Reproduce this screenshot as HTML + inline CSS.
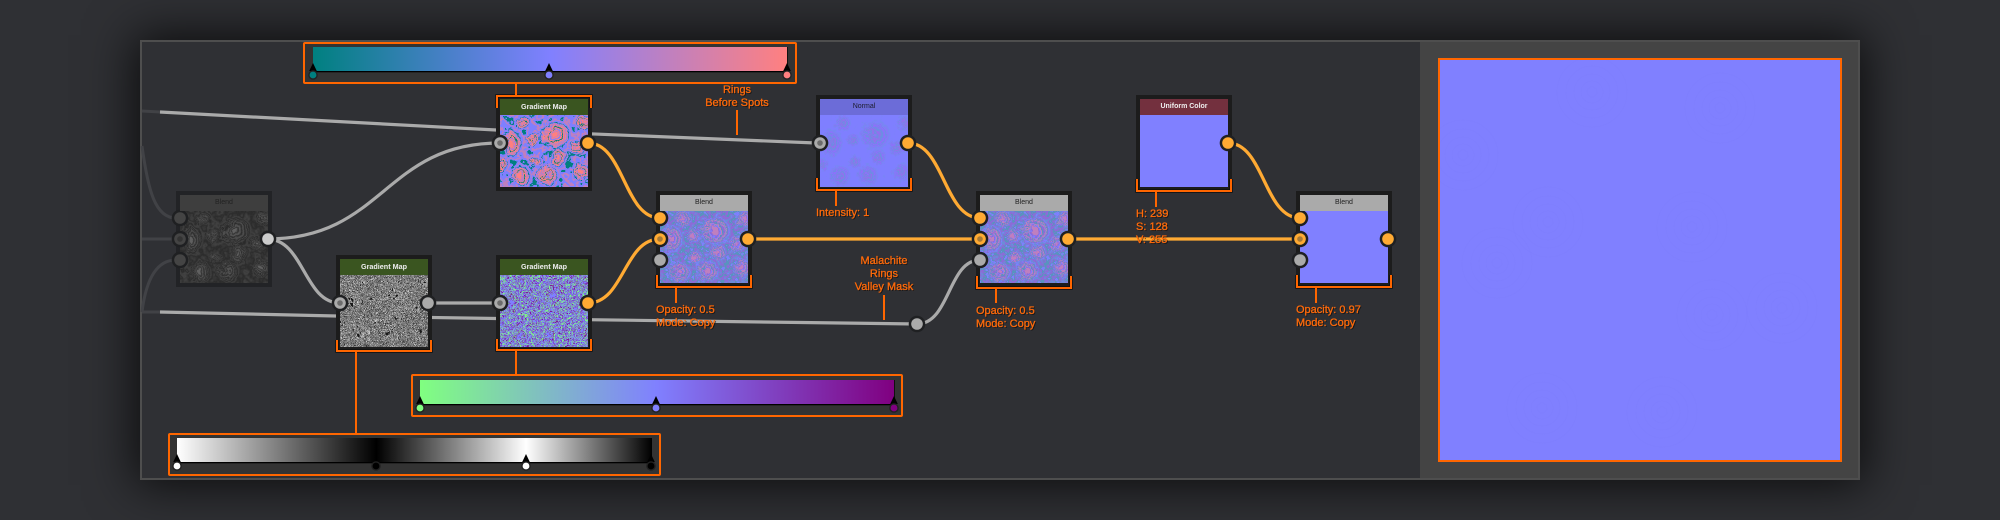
<!DOCTYPE html>
<html lang="en"><head><meta charset="utf-8"><title>Node graph</title>
<style>
html,body{margin:0;padding:0;width:2000px;height:520px;overflow:hidden;background:#2f3034}
#panel{position:absolute;left:140px;top:40px;width:1716px;height:436px;border:2px solid #4e4e4e;background:#2f3034;box-shadow:0 0 45px 5px rgba(0,0,0,.75)}
#right{position:absolute;left:1420px;top:42px;width:438px;height:436px;background:#444}
svg.m{position:absolute;left:0;top:0}
.t{position:absolute;font-family:"Liberation Sans",sans-serif;font-size:11px;line-height:13px;color:#ff6a0a;-webkit-text-stroke:.3px #ff6a0a;text-shadow:1px 1px 0 rgba(0,0,0,.55);white-space:nowrap}
.c{text-align:center;transform:translateX(-50%)}
.h{position:absolute;width:88px;height:16px;line-height:16px;text-align:center;font-family:"Liberation Sans",sans-serif;font-size:7px}
.gm{background:#3a5520;color:#eee;font-weight:bold;font-size:7.2px}
.bl{background:#aaa;color:#222}
</style></head><body>
<div id="panel"></div><div id="right"></div>
<svg class="m" width="2000" height="520" viewBox="0 0 2000 520" xmlns="http://www.w3.org/2000/svg">
<defs>
<radialGradient id="rg"><stop offset="0" stop-color="#fff"/><stop offset=".55" stop-color="#999"/><stop offset="1" stop-color="#333" stop-opacity="0"/></radialGradient>
<g id="h">
<rect x="-30" y="-30" width="150" height="135" fill="#3a3a3a"/>
<ellipse cx="55" cy="20" rx="19" ry="18" fill="url(#rg)"/>
<ellipse cx="12" cy="28" rx="13" ry="17" fill="url(#rg)"/>
<circle cx="58" cy="42" r="10" fill="url(#rg)"/>
<circle cx="48" cy="60" r="13" fill="url(#rg)"/>
<circle cx="20" cy="61" r="13" fill="url(#rg)"/>
<circle cx="77" cy="33" r="10" fill="url(#rg)"/>
<circle cx="35" cy="47" r="8" fill="url(#rg)"/>
<circle cx="23" cy="8" r="10" fill="url(#rg)"/>
<circle cx="82" cy="57" r="11" fill="url(#rg)"/>
<circle cx="33" cy="25" r="8" fill="url(#rg)"/>
<circle cx="85" cy="8" r="10" fill="url(#rg)"/>
<circle cx="2" cy="50" r="8" fill="url(#rg)"/>
</g>
<filter id="f1" filterUnits="userSpaceOnUse" x="-25" y="-25" width="138" height="122" color-interpolation-filters="sRGB">
<feTurbulence type="fractalNoise" baseFrequency=".11" numOctaves="3" seed="3" result="t"/>
<feDisplacementMap in="SourceGraphic" in2="t" scale="9" xChannelSelector="R" yChannelSelector="G" result="d"/>
<feColorMatrix in="t" type="matrix" values="1 0 0 0 0 1 0 0 0 0 1 0 0 0 0 0 0 0 0 1" result="n"/>
<feComposite in="d" in2="n" operator="arithmetic" k2="1" k3=".35" k4="-.12" result="x"/>
<feComponentTransfer in="x"><feFuncR type="discrete" tableValues="0 .5 0 .5 .5 0 .5 .75 .5 .5 0 .5 .75 1 .5 1 .75 1 0 1 .5 1 .75 1"/><feFuncG type="table" tableValues=".5 .5"/><feFuncB type="discrete" tableValues=".5 1 .5 1 1 .5 1 .75 1 1 .5 1 .75 .5 1 .5 .75 .5 .5 .5 1 .5 .75 .5"/></feComponentTransfer>
</filter>
<filter id="f2" filterUnits="userSpaceOnUse" x="-25" y="-25" width="138" height="122" color-interpolation-filters="sRGB">
<feTurbulence type="fractalNoise" baseFrequency=".35" numOctaves="2" seed="5" result="t"/>
<feDisplacementMap in="SourceGraphic" in2="t" scale="6" xChannelSelector="R" yChannelSelector="G" result="d"/>
<feColorMatrix in="t" type="matrix" values="1 0 0 0 0 1 0 0 0 0 1 0 0 0 0 0 0 0 0 1" result="n"/>
<feComposite in="d" in2="n" operator="arithmetic" k2=".8" k3=".7" k4="-.12" result="x"/>
<feComponentTransfer in="x"><feFuncR type="table" tableValues=".8 .2 .9 .1 .8 .15 .9 .2 .7 .1 .9 .2 .8 .1 .9 .1 .8 .3 .9 .1"/><feFuncG type="table" tableValues=".8 .2 .9 .1 .8 .15 .9 .2 .7 .1 .9 .2 .8 .1 .9 .1 .8 .3 .9 .1"/><feFuncB type="table" tableValues=".8 .2 .9 .1 .8 .15 .9 .2 .7 .1 .9 .2 .8 .1 .9 .1 .8 .3 .9 .1"/></feComponentTransfer>
</filter>
<filter id="f3" filterUnits="userSpaceOnUse" x="-25" y="-25" width="138" height="122" color-interpolation-filters="sRGB">
<feTurbulence type="fractalNoise" baseFrequency=".3" numOctaves="2" seed="8" result="t"/>
<feDisplacementMap in="SourceGraphic" in2="t" scale="6" xChannelSelector="R" yChannelSelector="G" result="d"/>
<feColorMatrix in="t" type="matrix" values="1 0 0 0 0 1 0 0 0 0 1 0 0 0 0 0 0 0 0 1" result="n"/>
<feComposite in="d" in2="n" operator="arithmetic" k2=".8" k3=".7" k4="-.12" result="x"/>
<feComponentTransfer in="x"><feFuncR type="table" tableValues=".5 .5"/><feFuncG type="discrete" tableValues=".5 1 .5 .25 .75 .5 .1 .5 .95 .3 .5 .75 .25 .5 .95 .1 .5 .8 .2 .5"/><feFuncB type="discrete" tableValues="1 .5 1 .75 .75 1 .6 1 .55 .8 1 .75 .75 1 .55 .6 1 .7 .7 1"/></feComponentTransfer>
</filter>
<filter id="f4" filterUnits="userSpaceOnUse" x="-25" y="-25" width="138" height="122" color-interpolation-filters="sRGB">
<feTurbulence type="fractalNoise" baseFrequency=".2" numOctaves="3" seed="11" result="t"/>
<feDisplacementMap in="SourceGraphic" in2="t" scale="7" xChannelSelector="R" yChannelSelector="G" result="d"/>
<feColorMatrix in="t" type="matrix" values="1 0 0 0 0 1 0 0 0 0 1 0 0 0 0 0 0 0 0 1" result="n"/>
<feComposite in="d" in2="n" operator="arithmetic" k2="1" k3=".35" k4="-.1" result="x"/>
<feComponentTransfer in="x"><feFuncR type="discrete" tableValues=".42 .35 .55 .42 .5 .35 .55 .42 .5 .55 .35 .75 .42 .75 .55 .35 .75 .5 .55 .75"/><feFuncG type="discrete" tableValues=".55 .58 .42 .55 .5 .58 .42 .55 .5 .42 .58 .5 .55 .5 .42 .58 .5 .5 .42 .5"/><feFuncB type="discrete" tableValues=".85 .75 .85 .85 1 .75 .85 .85 1 .85 .75 .75 .85 .75 .85 .75 .75 1 .85 .75"/></feComponentTransfer>
</filter>
<filter id="f5" filterUnits="userSpaceOnUse" x="-25" y="-25" width="138" height="122" color-interpolation-filters="sRGB">
<feTurbulence type="fractalNoise" baseFrequency=".3" numOctaves="2" seed="4" result="t"/>
<feDisplacementMap in="SourceGraphic" in2="t" scale="7" xChannelSelector="R" yChannelSelector="G" result="d"/>
<feColorMatrix in="t" type="matrix" values="1 0 0 0 0 1 0 0 0 0 1 0 0 0 0 0 0 0 0 1" result="n"/>
<feComposite in="d" in2="n" operator="arithmetic" k2="1" k3=".25" k4="-.12" result="x"/>
<feComponentTransfer in="x"><feFuncR type="table" tableValues=".5 .5 .5 .5 .46 .56 .42 .58 .4 .6 .42 .6"/><feFuncG type="table" tableValues=".5 .5 .5 .5 .54 .44 .56 .42 .58 .42 .56 .42"/><feFuncB type="table" tableValues="1 1 1 1 .94 1 .9 1 .88 .94 .88 1"/></feComponentTransfer>
</filter>
<filter id="f6" filterUnits="userSpaceOnUse" x="-25" y="-25" width="138" height="122" color-interpolation-filters="sRGB">
<feTurbulence type="fractalNoise" baseFrequency=".11" numOctaves="3" seed="3" result="t"/>
<feDisplacementMap in="SourceGraphic" in2="t" scale="9" xChannelSelector="R" yChannelSelector="G" result="d"/>
<feColorMatrix in="t" type="matrix" values="1 0 0 0 0 1 0 0 0 0 1 0 0 0 0 0 0 0 0 1" result="n"/>
<feComposite in="d" in2="n" operator="arithmetic" k2="1" k3=".35" k4="-.12" result="x"/>
<feComponentTransfer in="x"><feFuncR type="table" tableValues=".18 .23 .16 .25 .17 .26 .16 .28 .15 .3 .16 .33 .17 .35 .18 .38"/><feFuncG type="table" tableValues=".18 .23 .16 .25 .17 .26 .16 .28 .15 .3 .16 .33 .17 .35 .18 .38"/><feFuncB type="table" tableValues=".18 .23 .16 .25 .17 .26 .16 .28 .15 .3 .16 .33 .17 .35 .18 .38"/></feComponentTransfer>
</filter>
<g id="so"><circle r="8.3" fill="#1f2022"/><circle r="5.8" fill="#ffaa33"/></g>
<g id="sod"><circle r="8.3" fill="#1f2022"/><circle r="5.8" fill="#ffaa33"/><circle r="2.8" fill="#a97a35"/></g>
<g id="sg"><circle r="8.3" fill="#1f2022"/><circle r="5.8" fill="#aaa"/></g>
<g id="sgd"><circle r="8.3" fill="#1f2022"/><circle r="5.8" fill="#aaa"/><circle r="2.8" fill="#6c6c6c"/></g>
<g id="sd"><circle r="8.3" fill="#1f2022"/><circle r="5.8" fill="#444"/></g>
<g id="sdd"><circle r="8.3" fill="#1f2022"/><circle r="5.8" fill="#444"/><circle r="2.8" fill="#333"/></g>
<path id="tri" d="M0,-12 L3.8,-4 H-3.8 Z" fill="#000"/>
<linearGradient id="g1"><stop offset="0" stop-color="#008080"/><stop offset=".5" stop-color="#8080ff"/><stop offset="1" stop-color="#ff8080"/></linearGradient>
<linearGradient id="g2"><stop offset="0" stop-color="#80ff80"/><stop offset=".5" stop-color="#8080ff"/><stop offset="1" stop-color="#800080"/></linearGradient>
<linearGradient id="g3"><stop offset="0" stop-color="#fff"/><stop offset=".42" stop-color="#000"/><stop offset=".735" stop-color="#fff"/><stop offset="1" stop-color="#000"/></linearGradient>
<g id="rings" fill="none" stroke="#7a7af8" stroke-opacity=".18" stroke-width="1"><circle r="5"/><circle r="11"/><circle r="18"/><circle r="26"/><circle r="35"/></g>
<g id="brk"><path d="M497,108 V96 H591 V108" /></g>
</defs>

<!-- dim wires -->
<g fill="none" stroke="#414246" stroke-width="3">
<path d="M142,146 C148,190 155,218 176,218"/>
<path d="M142,239 H180"/>
<path d="M142,312 C146,280 156,260 176,260"/>
<path d="M142,111 L160,112"/>
<path d="M142,312 H160"/>
</g>
<!-- grey wires -->
<g fill="none" stroke="#aaa" stroke-width="3.2">
<path d="M160,112 L496,130 L816,143"/>
<path d="M160,312 L336,316 L496,318.5 L917,324"/>
<path d="M267,239 C384,239 384,143 500,143"/>
<path d="M267,239 C304,239 304,303 340,303"/>
<path d="M428,303 H500"/>
<path d="M917,324 C950,324 948,260 980,260"/>
</g>
<!-- orange wires -->
<g fill="none" stroke="#ffaa33" stroke-width="3.2">
<path d="M588,143 C624,143 624,218 660,218"/>
<path d="M588,303 C624,303 624,239 660,239"/>
<path d="M748,239 H980"/>
<path d="M908,143 C944,143 944,218 980,218"/>
<path d="M1068,239 H1300"/>
<path d="M1228,143 C1264,143 1264,218 1300,218"/>
</g>

<!-- node frames -->
<g fill="#1c1c1c">
<rect x="176" y="191" width="96" height="96" fill="#222326"/>
<rect x="336" y="255" width="96" height="96"/>
<rect x="496" y="95" width="96" height="96"/>
<rect x="496" y="255" width="96" height="96"/>
<rect x="656" y="191" width="96" height="96"/>
<rect x="816" y="95" width="96" height="96"/>
<rect x="976" y="191" width="96" height="96"/>
<rect x="1136" y="95" width="96" height="96"/>
<rect x="1296" y="191" width="96" height="96"/>
</g>
<!-- node textures -->
<svg x="180" y="211" width="88" height="72" viewBox="0 0 88 72"><use href="#h" filter="url(#f6)"/></svg>
<svg x="340" y="275" width="88" height="72" viewBox="0 0 88 72"><use href="#h" filter="url(#f2)"/></svg>
<svg x="500" y="115" width="88" height="72" viewBox="0 0 88 72"><use href="#h" filter="url(#f1)"/></svg>
<svg x="500" y="275" width="88" height="72" viewBox="0 0 88 72"><use href="#h" filter="url(#f3)"/></svg>
<svg x="660" y="211" width="88" height="72" viewBox="0 0 88 72"><use href="#h" filter="url(#f4)"/></svg>
<svg x="820" y="115" width="88" height="72" viewBox="0 0 88 72"><use href="#h" filter="url(#f5)"/></svg>
<svg x="980" y="211" width="88" height="72" viewBox="0 0 88 72"><use href="#h" filter="url(#f4)"/></svg>
<rect x="1140" y="115" width="88" height="72" fill="#8080ff"/>
<rect x="1300" y="211" width="88" height="72" fill="#8080ff"/>

<!-- bracket outlines -->
<g fill="none" stroke="#0e0e0e" stroke-width="3.4">
<path d="M497,108 V96 H591 V108"/>
<path d="M497,339 V350 H591 V339"/>
<path d="M337,340 V351 H431 V340"/>
<path d="M817,178 V190 H911 V178"/>
<path d="M657,275 V287 H751 V275"/>
<path d="M977,276 V288 H1071 V276"/>
<path d="M1137,179 V191 H1231 V179"/>
<path d="M1297,275 V287 H1391 V275"/>
</g>
<!-- orange brackets and stems -->
<g fill="none" stroke="#ff6600" stroke-width="2">
<path d="M516,84 V96"/><path d="M497,108 V96 H591 V108"/>
<path d="M497,339 V350 H591 V339"/><path d="M516,350 V375"/>
<path d="M337,340 V351 H431 V340"/><path d="M356,351 V433"/>
<path d="M817,178 V190 H911 V178"/><path d="M836,190 V206"/>
<path d="M657,275 V287 H751 V275"/><path d="M676,287 V303"/>
<path d="M977,276 V288 H1071 V276"/><path d="M996,288 V303"/>
<path d="M1137,179 V191 H1231 V179"/><path d="M1156,191 V207"/>
<path d="M1297,275 V287 H1391 V275"/><path d="M1316,287 V303"/>
<path d="M737,110 V135"/><path d="M884,295 V320"/>
</g>

<!-- sockets -->
<use href="#sd" x="180" y="218"/><use href="#sdd" x="180" y="239"/><use href="#sd" x="180" y="260"/>
<g><circle cx="268" cy="239" r="8.3" fill="#1f2022"/><circle cx="268" cy="239" r="5.8" fill="#ccc"/></g>
<use href="#sgd" x="340" y="303"/><use href="#sg" x="428" y="303"/>
<use href="#sgd" x="500" y="143"/><use href="#so" x="588" y="143"/>
<use href="#sgd" x="500" y="303"/><use href="#so" x="588" y="303"/>
<use href="#so" x="660" y="218"/><use href="#sod" x="660" y="239"/><use href="#sg" x="660" y="260"/><use href="#so" x="748" y="239"/>
<use href="#sgd" x="820" y="143"/><use href="#so" x="908" y="143"/>
<use href="#sg" x="917" y="324"/>
<use href="#so" x="980" y="218"/><use href="#sod" x="980" y="239"/><use href="#sg" x="980" y="260"/><use href="#so" x="1068" y="239"/>
<use href="#so" x="1228" y="143"/>
<use href="#so" x="1300" y="218"/><use href="#sod" x="1300" y="239"/><use href="#sg" x="1300" y="260"/><use href="#so" x="1388" y="239"/>

<!-- gradient editors -->
<rect x="304" y="43" width="492" height="40" rx="1" fill="#333" stroke="#ff6600" stroke-width="2"/>
<rect x="313" y="47" width="474" height="24" fill="url(#g1)"/>
<rect x="313" y="71" width="475" height="1.3" fill="#000"/><rect x="787" y="47" width="1" height="24" fill="#111"/>
<g transform="translate(0,75)"><use href="#tri" x="313"/><use href="#tri" x="549"/><use href="#tri" x="787"/>
<circle cx="313" r="4.8" fill="#222"/><circle cx="313" r="3.4" fill="#008080"/>
<circle cx="549" r="4.8" fill="#222"/><circle cx="549" r="3.4" fill="#8080ff"/>
<circle cx="787" r="4.8" fill="#222"/><circle cx="787" r="3.4" fill="#ff8080"/></g>

<rect x="412" y="375" width="490" height="41" rx="1" fill="#333" stroke="#ff6600" stroke-width="2"/>
<rect x="420" y="380" width="474" height="24" fill="url(#g2)"/>
<rect x="420" y="404" width="475" height="1.3" fill="#000"/><rect x="894" y="380" width="1" height="24" fill="#111"/>
<g transform="translate(0,408)"><use href="#tri" x="420"/><use href="#tri" x="656"/><use href="#tri" x="894"/>
<circle cx="420" r="4.8" fill="#222"/><circle cx="420" r="3.4" fill="#80ff80"/>
<circle cx="656" r="4.8" fill="#222"/><circle cx="656" r="3.4" fill="#8080ff"/>
<circle cx="894" r="4.8" fill="#222"/><circle cx="894" r="3.4" fill="#800080"/></g>

<rect x="169" y="434" width="491" height="41" rx="1" fill="#333" stroke="#ff6600" stroke-width="2"/>
<rect x="177" y="438" width="475" height="24" fill="url(#g3)"/>
<rect x="177" y="462" width="475" height="1.3" fill="#000"/>
<g transform="translate(0,466)"><use href="#tri" x="177"/><use href="#tri" x="526"/><use href="#tri" x="651"/>
<circle cx="177" r="4.8" fill="#222"/><circle cx="177" r="3.4" fill="#fff"/>
<circle cx="376" r="4.8" fill="#222"/><circle cx="376" r="3.4" fill="#000"/>
<circle cx="526" r="4.8" fill="#222"/><circle cx="526" r="3.4" fill="#fff"/>
<circle cx="651" r="4.8" fill="#222"/><circle cx="651" r="3.4" fill="#000"/></g>

<!-- preview -->
<rect x="1439" y="59" width="402" height="402" fill="#8080ff" stroke="#ff6600" stroke-width="2"/>
<svg x="1440" y="60" width="400" height="400" viewBox="0 0 400 400">
<use href="#rings" x="152" y="32"/><use href="#rings" x="280" y="48"/><use href="#rings" x="252" y="167"/><use href="#rings" x="57" y="203"/>
<use href="#rings" x="272" y="255"/><use href="#rings" x="342" y="248"/><use href="#rings" x="102" y="348"/><use href="#rings" x="222" y="352"/>
<use href="#rings" x="23" y="95"/><use href="#rings" x="108" y="162"/>
</svg>
</svg>

<!-- node headers -->
<div class="h" style="left:180px;top:195px;background:#3e3e3e;color:#222">Blend</div>
<div class="h gm" style="left:340px;top:259px">Gradient Map</div>
<div class="h gm" style="left:500px;top:99px">Gradient Map</div>
<div class="h gm" style="left:500px;top:259px">Gradient Map</div>
<div class="h bl" style="left:660px;top:195px">Blend</div>
<div class="h" style="left:820px;top:99px;background:#6c6cd8;color:#1c1c2c">Normal</div>
<div class="h bl" style="left:980px;top:195px">Blend</div>
<div class="h" style="left:1140px;top:99px;background:#73303e;color:#eee;font-weight:bold">Uniform Color</div>
<div class="h bl" style="left:1300px;top:195px">Blend</div>

<!-- labels -->
<div class="t c" style="left:737px;top:84px">Rings<br>Before Spots</div>
<div class="t" style="left:816px;top:207px">Intensity: 1</div>
<div class="t" style="left:656px;top:304px">Opacity: 0.5<br>Mode: Copy</div>
<div class="t" style="left:976px;top:305px">Opacity: 0.5<br>Mode: Copy</div>
<div class="t" style="left:1296px;top:304px">Opacity: 0.97<br>Mode: Copy</div>
<div class="t" style="left:1136px;top:208px">H: 239<br>S: 128<br>V: 255</div>
<div class="t c" style="left:884px;top:255px">Malachite<br>Rings<br>Valley Mask</div>
</body></html>
